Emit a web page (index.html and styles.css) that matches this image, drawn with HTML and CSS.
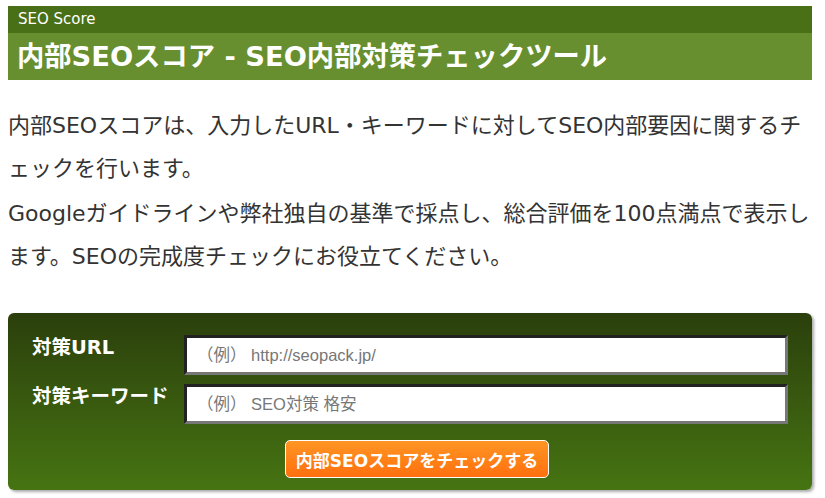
FILE: index.html
```html
<!DOCTYPE html>
<html lang="ja">
<head>
    <meta charset="UTF-8">
    <meta name="viewport" content="width=device-width, initial-scale=1.0">
    <title>SEO Score</title>
    <link rel="stylesheet" href="styles.css">
</head>
<body>

<div id="page">
    <div class="pageHead">
        <div class="pageHead-sub">SEO Score</div>
        <h1 class="pageHead-title">内部SEOスコア - SEO内部対策チェックツール</h1>
    </div>

    <div class="intro">
        <p>内部SEOスコアは、入力したURL・キーワードに対してSEO内部要因に関するチェックを行います。</p>
        <p>Googleガイドラインや弊社独自の基準で採点し、総合評価を100点満点で表示します。SEOの完成度チェックにお役立てください。</p>
    </div>

    <form class="checkForm" onsubmit="return false;">
        <div class="formRow">
            <label for="url">対策URL</label>
            <input type="text" id="url" placeholder="（例） http://seopack.jp/">
        </div>
        <div class="formRow">
            <label for="kw">対策キーワード</label>
            <input type="text" id="kw" placeholder="（例） SEO対策 格安">
        </div>
        <div class="formSubmit">
            <button type="submit">内部SEOスコアをチェックする</button>
        </div>
    </form>
</div>

</body>
</html>
```

FILE: styles.css
```css
body {
    margin: 0;
    padding: 6px 8px;
    background-color: #fff;
    color: #333;
    font-family: "DejaVu Sans", "Noto Sans CJK JP", sans-serif;
}

#page {
    width: 804px;
}

.pageHead-sub {
    background-color: #4a7017;
    color: #fff;
    font-size: 15px;
    line-height: 27px;
    height: 27px;
    padding-left: 10px;
}

.pageHead-title {
    margin: 0;
    background-color: #678f30;
    color: #fff;
    font-size: 27.3px;
    font-weight: bold;
    line-height: 47px;
    height: 47px;
    padding-left: 9px;
    white-space: nowrap;
}

.intro {
    margin-top: 24px;
    font-size: 22px;
    line-height: 43px;
}

.intro p {
    margin: 0 0 2px;
}

.checkForm {
    margin-top: 35px;
    padding: 22px 24px 12px;
    border-radius: 6px;
    background: linear-gradient(to bottom, #2b3f0c, #467412);
    box-shadow: 2px 2px 3px #aaa;
}

.formRow {
    display: flex;
    align-items: flex-start;
    margin-bottom: 9px;
}

.formRow label {
    width: 152px;
    color: #fff;
    font-size: 19.5px;
    font-weight: bold;
    line-height: 26px;
    white-space: nowrap;
}

.formRow input {
    width: 604px;
    height: 40px;
    box-sizing: border-box;
    margin: 0;
    padding: 0 10px;
    border-style: solid;
    border-width: 3px;
    border-color: #222 #777 #777 #222;
    font-family: "Liberation Sans", "Noto Sans CJK JP", sans-serif;
    font-size: 16.5px;
}

.formRow input::placeholder {
    color: #777;
}

.formSubmit {
    padding: 7px 0 0 253px;
}

.formSubmit button {
    width: 264px;
    height: 38px;
    border: 1px solid #fff;
    border-radius: 5px;
    background: linear-gradient(to bottom, #ff9524, #ff700e);
    color: #fff;
    font-family: "DejaVu Sans", "Noto Sans CJK JP", sans-serif;
    font-size: 17px;
    font-weight: bold;
    cursor: pointer;
}
```
